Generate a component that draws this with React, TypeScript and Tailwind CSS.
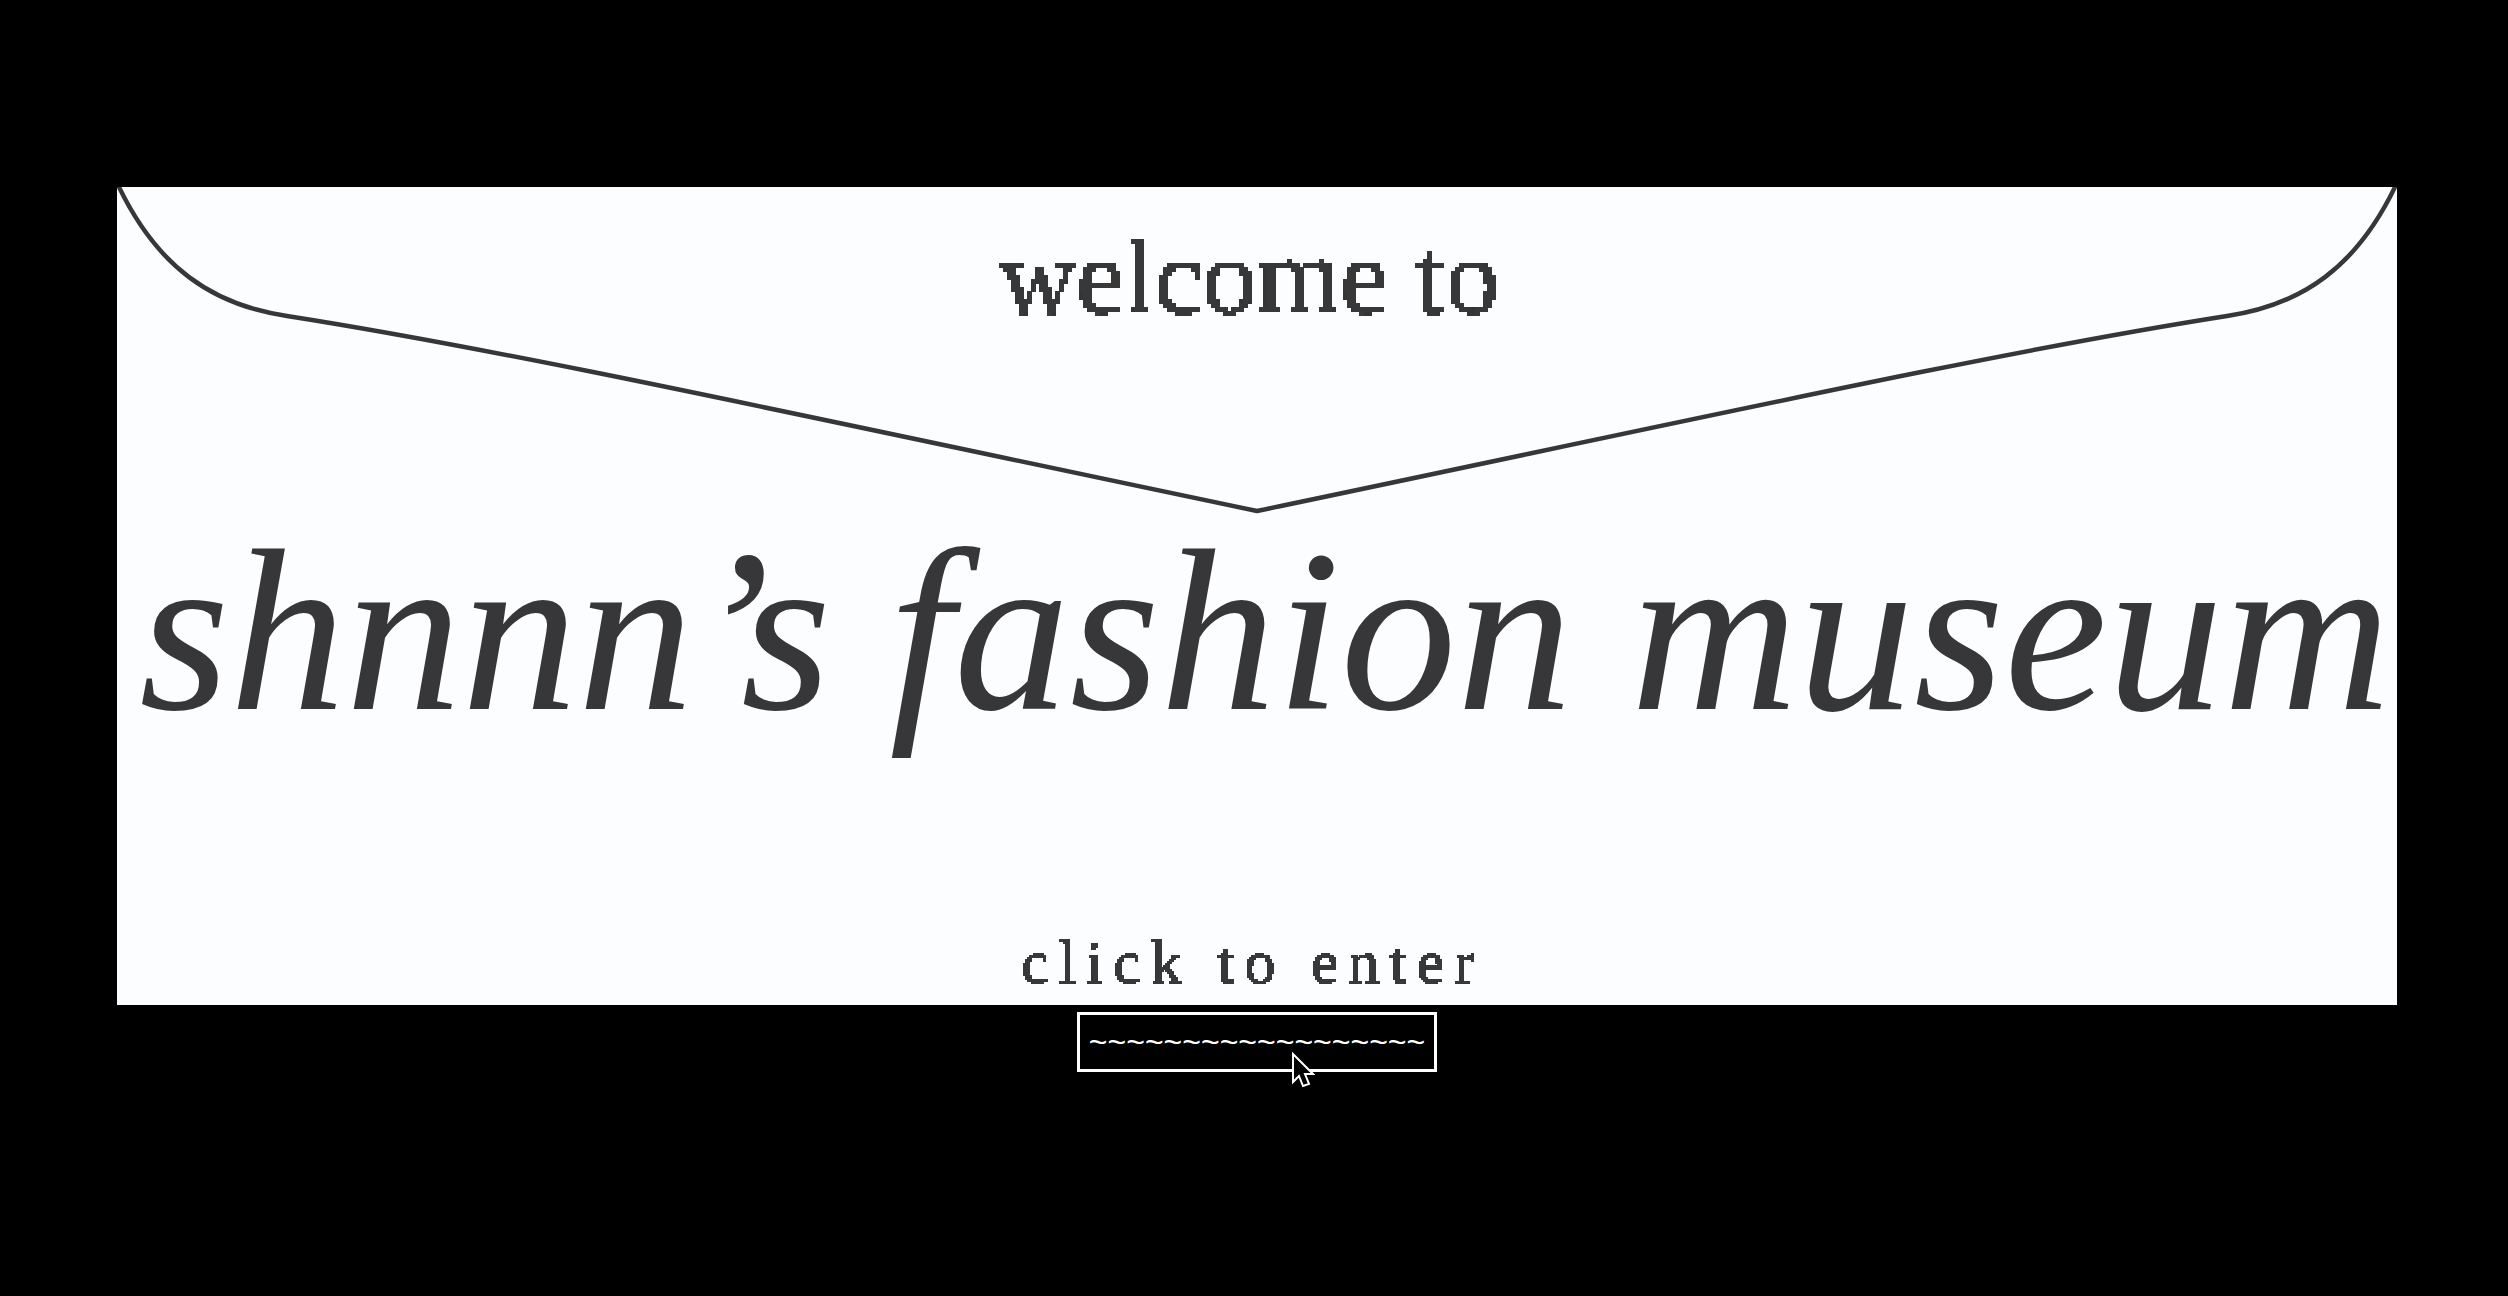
function PixelFilters() {
  return (
    <svg width="0" height="0" className="absolute" aria-hidden="true">
      <defs>
        <filter id="pixel-large" x="0" y="0" width="100%" height="100%">
          <feFlood x="2" y="2" width="1" height="1" floodColor="#000" />
          <feComposite width="4" height="4" />
          <feTile result="grid" />
          <feComposite in="SourceGraphic" in2="grid" operator="in" />
          <feComponentTransfer>
            <feFuncA type="discrete" tableValues="0 1 1" />
          </feComponentTransfer>
          <feMorphology operator="dilate" radius="2" />
        </filter>
        <filter id="pixel-small" x="0" y="0" width="100%" height="100%">
          <feFlood x="1" y="1" width="1" height="1" floodColor="#000" />
          <feComposite width="2" height="2" />
          <feTile result="grid" />
          <feComposite in="SourceGraphic" in2="grid" operator="in" />
          <feComponentTransfer>
            <feFuncA type="discrete" tableValues="0 1" />
          </feComponentTransfer>
          <feMorphology operator="dilate" radius="1" />
        </filter>
      </defs>
    </svg>
  );
}

function EnvelopeFlap() {
  return (
    <svg
      viewBox="0 0 2280 330"
      className="absolute inset-x-0 top-0 h-auto w-full"
      fill="none"
      stroke="#373739"
      strokeWidth="4.500"
      aria-hidden="true"
    >
      <path d="M1 -2 C40 80 95 118 170 129 C400 165 700 232 1140 324 C1580 232 1880 165 2110 129 C2185 118 2240 80 2279 -2" />
    </svg>
  );
}

function Pointer() {
  return (
    <svg
      viewBox="0 0 24 38"
      className="absolute top-10 left-[214px] h-[38px] w-6"
      fill="#000"
      stroke="#fff"
      strokeWidth="2"
      aria-hidden="true"
    >
      <path d="M2 2 V30 L8 24 L12 34 L18 32 L14 22 H22 Z" />
    </svg>
  );
}

export default function App() {
  return (
    <main className="flex min-h-screen flex-col items-center overflow-hidden bg-black pt-[187px] pr-[111px] pl-[117px]">
      <PixelFilters />
      <a
        href="#museum"
        className="relative flex w-full flex-col items-center bg-[#fcfdff] pt-9 pb-3 font-['Liberation_Serif',serif] whitespace-nowrap text-[#373739]"
      >
        <EnvelopeFlap />
        <p className="pr-4 text-[108px] leading-[108px] filter-[url(#pixel-large)]">welcome to</p>
        <h1 className="mt-[184px] pl-4 text-[232px] leading-[232px] italic">shnnn’s fashion museum</h1>
        <p className="mt-[184px] pr-2 text-[62px] leading-[62px] tracking-[10px] filter-[url(#pixel-small)]">
          click to enter
        </p>
      </a>
      <div className="relative mt-[7px]">
        <button
          type="button"
          className="block border-[3px] border-white bg-black px-[9px] py-[9px] font-['Liberation_Sans',sans-serif] text-[32px] leading-9 text-white"
        >
          ~~~~~~~~~~~~~~~~~~
        </button>
        <Pointer />
      </div>
    </main>
  );
}
